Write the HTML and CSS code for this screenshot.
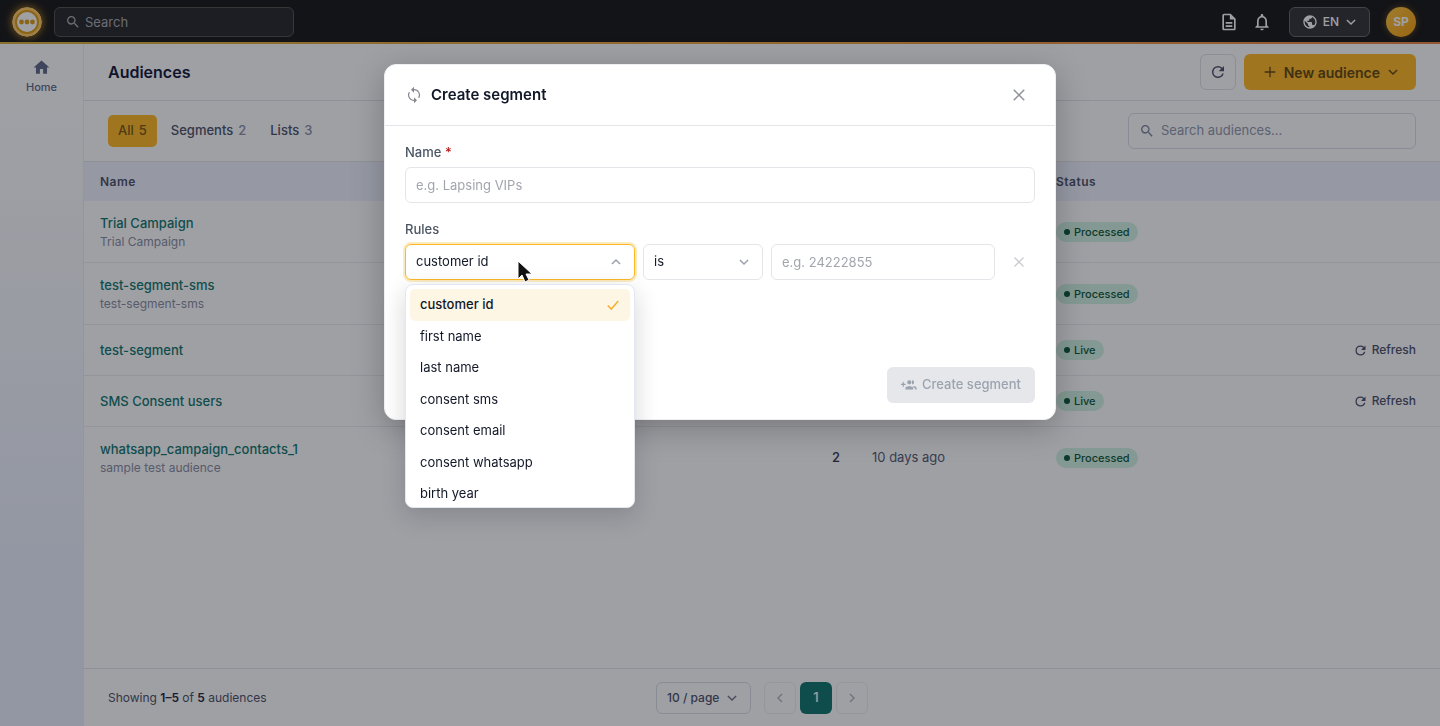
FILE: index.html
```html
<!DOCTYPE html>
<html lang="en">

<head>
    <meta charset="UTF-8">
    <meta name="viewport" content="width=device-width, initial-scale=1.0">
    <title>Audiences</title>
    <link rel="stylesheet" href="styles.css">
</head>

<body>
    <svg class="sprite" aria-hidden="true">
        <symbol id="search" viewBox="0 0 24 24">
            <path d="M15.5 14h-.79l-.28-.27A6.47 6.47 0 0 0 16 9.5 6.5 6.5 0 1 0 9.5 16c1.61 0 3.09-.59 4.23-1.57l.27.28v.79l5 4.99L20.49 19l-4.99-5zm-6 0C7.01 14 5 11.99 5 9.5S7.01 5 9.5 5 14 7.01 14 9.5 11.99 14 9.5 14z"/>
        </symbol>
        <symbol id="chevron" viewBox="0 0 24 24">
            <path d="M5 8.5l7 7 7-7" fill="none" stroke="currentColor" stroke-width="2.5"/>
        </symbol>
        <symbol id="close" viewBox="0 0 24 24">
            <path d="M3 3l18 18M21 3L3 21" fill="none" stroke="currentColor" stroke-width="2.5"/>
        </symbol>
        <symbol id="refresh" viewBox="0 0 24 24">
            <path d="M17.65 6.35A7.96 7.96 0 0 0 12 4a8 8 0 1 0 7.73 10h-2.08A6 6 0 1 1 12 6c1.66 0 3.14.69 4.22 1.78L13 11h7V4l-2.35 2.35z"/>
        </symbol>
    </svg>

    <header class="topbar">
        <a class="logo" href="#" aria-label="Dashboard">
            <svg viewBox="0 0 30 30">
                <circle cx="15" cy="15" r="15" fill="#ffc860"/>
                <circle cx="15" cy="15" r="11" fill="#fff" stroke="#dc9d15" stroke-width="2"/>
                <circle cx="9.5" cy="15" r="2.4" fill="#dc9d15"/>
                <circle cx="15" cy="15" r="2.4" fill="#dc9d15"/>
                <circle cx="20.5" cy="15" r="2.4" fill="#dc9d15"/>
            </svg>
        </a>
        <div class="top-search">
            <svg class="icon"><use href="#search"/></svg>
            <input type="search" placeholder="Search" aria-label="Search">
        </div>
        <div class="top-actions">
            <button class="icon-btn" aria-label="Documents">
                <svg viewBox="0 0 24 24"><path d="M8 16h8v2H8zm0-4h8v2H8zm6-10H6c-1.1 0-2 .9-2 2v16c0 1.1.89 2 1.99 2H18c1.1 0 2-.9 2-2V8l-6-6zm4 18H6V4h7v5h5v11z"/></svg>
            </button>
            <button class="icon-btn" aria-label="Notifications">
                <svg viewBox="0 0 24 24"><path d="M12 22c1.1 0 2-.9 2-2h-4c0 1.1.9 2 2 2zm6-6v-5c0-3.07-1.63-5.64-4.5-6.32V4c0-.83-.67-1.5-1.5-1.5s-1.5.67-1.5 1.5v.68C7.64 5.36 6 7.92 6 11v5l-2 2v1h16v-1l-2-2zm-2 1H8v-6c0-2.48 1.51-4.5 4-4.5s4 2.02 4 4.5v6z"/></svg>
            </button>
            <button class="lang">
                <svg class="icon" viewBox="0 0 24 24"><path d="M12 2C6.48 2 2 6.48 2 12s4.48 10 10 10 10-4.48 10-10S17.52 2 12 2zm-1 17.93c-3.95-.49-7-3.85-7-7.93 0-.62.08-1.21.21-1.79L9 15v1c0 1.1.9 2 2 2v1.93zm6.9-2.54c-.26-.81-1-1.39-1.9-1.39h-1v-3c0-.55-.45-1-1-1H8v-2h2c.55 0 1-.45 1-1V7h2c1.1 0 2-.9 2-2v-.41c2.93 1.19 5 4.06 5 7.41 0 2.08-.8 3.97-2.1 5.39z"/></svg>
                EN
                <svg class="caret"><use href="#chevron"/></svg>
            </button>
            <button class="avatar">SP</button>
        </div>
    </header>

    <div class="layout">
        <nav class="sidebar">
            <a href="#">
                <svg viewBox="0 0 24 24"><path d="M10 20v-6h4v6h5v-8h3L12 3 2 12h3v8z"/></svg>
                Home
            </a>
        </nav>

        <main>
            <div class="page-head">
                <h1>Audiences</h1>
                <button class="reload" aria-label="Reload"><svg><use href="#refresh"/></svg></button>
                <button class="new-btn">
                    <svg class="icon" viewBox="0 0 24 24"><path d="M20 13h-7v7h-2v-7H4v-2h7V4h2v7h7v2z"/></svg>
                    New audience
                    <svg class="caret"><use href="#chevron"/></svg>
                </button>
            </div>

            <div class="filters">
                <div class="tabs">
                    <button class="active">All <span>5</span></button>
                    <button>Segments <span>2</span></button>
                    <button>Lists <span>3</span></button>
                </div>
                <div class="table-search">
                    <svg class="icon"><use href="#search"/></svg>
                    <input type="search" placeholder="Search audiences..." aria-label="Search audiences">
                </div>
            </div>

            <table>
                <colgroup>
                    <col>
                    <col class="col-count">
                    <col class="col-date">
                    <col class="col-status">
                    <col class="col-action">
                </colgroup>
                <thead>
                    <tr>
                        <th>Name</th>
                        <th></th>
                        <th></th>
                        <th>Status</th>
                        <th></th>
                    </tr>
                </thead>
                <tbody>
                    <tr>
                        <td><a href="#">Trial Campaign</a><small>Trial Campaign</small></td>
                        <td></td>
                        <td></td>
                        <td><span class="badge">Processed</span></td>
                        <td></td>
                    </tr>
                    <tr>
                        <td><a href="#">test-segment-sms</a><small>test-segment-sms</small></td>
                        <td></td>
                        <td></td>
                        <td><span class="badge">Processed</span></td>
                        <td></td>
                    </tr>
                    <tr>
                        <td><a href="#">test-segment</a></td>
                        <td></td>
                        <td></td>
                        <td><span class="badge">Live</span></td>
                        <td><button class="row-btn"><svg><use href="#refresh"/></svg>Refresh</button></td>
                    </tr>
                    <tr>
                        <td><a href="#">SMS Consent users</a></td>
                        <td></td>
                        <td></td>
                        <td><span class="badge">Live</span></td>
                        <td><button class="row-btn"><svg><use href="#refresh"/></svg>Refresh</button></td>
                    </tr>
                    <tr>
                        <td><a href="#">whatsapp_campaign_contacts_1</a><small>sample test audience</small></td>
                        <td class="count">2</td>
                        <td class="date">10 days ago</td>
                        <td><span class="badge">Processed</span></td>
                        <td></td>
                    </tr>
                </tbody>
            </table>

            <footer class="pagination">
                <p>Showing <b>1–5</b> of <b>5</b> audiences</p>
                <div class="pager">
                    <div class="select page-size">
                        <select aria-label="Rows per page">
                            <option>10 / page</option>
                        </select>
                        <svg class="caret"><use href="#chevron"/></svg>
                    </div>
                    <button class="prev" disabled aria-label="Previous page"><svg><use href="#chevron"/></svg></button>
                    <button class="current">1</button>
                    <button class="next" disabled aria-label="Next page"><svg><use href="#chevron"/></svg></button>
                </div>
            </footer>
        </main>
    </div>

    <div class="overlay">
        <form class="modal" role="dialog" aria-labelledby="modalTitle">
            <div class="modal-head">
                <svg class="sync" viewBox="0 0 24 24"><path d="M12 4V1L8 5l4 4V5.500a6.500 6.500 0 0 1 5.600 9.800l1.100 1.100A8 8 0 0 0 12 4zM12 18.500a6.500 6.500 0 0 1-5.600-9.800L5.300 7.600A8 8 0 0 0 12 20v3l4-4-4-4v3.500z"/></svg>
                <h2 id="modalTitle">Create segment</h2>
                <button type="button" class="close-btn" aria-label="Close"><svg><use href="#close"/></svg></button>
            </div>
            <div class="modal-body">
                <div class="field">
                    <label for="segmentName">Name <span class="required">*</span></label>
                    <input id="segmentName" type="text" placeholder="e.g. Lapsing VIPs">
                </div>
                <div class="field rules">
                    <label for="ruleField">Rules</label>
                    <div class="rule">
                        <div class="select open">
                            <select id="ruleField">
                                <option>customer id</option>
                            </select>
                            <svg class="caret"><use href="#chevron"/></svg>
                            <ul class="menu" role="listbox">
                                <li role="option" aria-selected="true">customer id
                                    <svg viewBox="0 0 24 24"><path d="M3 13l6 6L21 5" fill="none" stroke="currentColor" stroke-width="2.500"/></svg>
                                </li>
                                <li role="option">first name</li>
                                <li role="option">last name</li>
                                <li role="option">consent sms</li>
                                <li role="option">consent email</li>
                                <li role="option">consent whatsapp</li>
                                <li role="option">birth year</li>
                            </ul>
                            <svg class="cursor" viewBox="0 0 16 24"><path d="M1 1v18l4-4 3 7 4-2-3-6h6z" fill="#111" stroke="#fff" stroke-width="1"/></svg>
                        </div>
                        <div class="select">
                            <select aria-label="Operator">
                                <option>is</option>
                            </select>
                            <svg class="caret"><use href="#chevron"/></svg>
                        </div>
                        <input type="text" placeholder="e.g. 24222855" aria-label="Value">
                        <button type="button" class="remove-btn" disabled aria-label="Remove rule"><svg><use href="#close"/></svg></button>
                    </div>
                </div>
            </div>
            <div class="modal-foot">
                <button class="submit" disabled>
                    <svg viewBox="0 0 24 24" fill="none" stroke="currentColor" stroke-width="1.800">
                        <path d="M0 11h7M3.500 7.500v7"/>
                        <circle cx="12.500" cy="8" r="2.300"/>
                        <path d="M16.500 5.700a2.300 2.300 0 1 1 0 4.600"/>
                        <path d="M7.500 18v-1c0-3 10-3 10 0v1zM18.500 14.500c2.500.2 4 1.200 4 2.500v1.800"/>
                    </svg>
                    Create segment
                </button>
            </div>
        </form>
    </div>
</body>

</html>
```
FILE: styles.css
```css
* {
    box-sizing: border-box;
}

body {
    margin: 0;
    min-height: 100vh;
    display: flex;
    flex-direction: column;
    font-family: Inter, "Liberation Sans", sans-serif;
    font-size: 13px;
    line-height: 1.5;
    color: #111827;
    background: #fff;
}

button,
input,
select {
    font: inherit;
    color: inherit;
}

button {
    padding: 0;
    border: 0;
    background: none;
    display: flex;
    align-items: center;
    justify-content: center;
}

input {
    min-width: 0;
}

a {
    text-decoration: none;
}

h1,
h2,
p,
ul {
    margin: 0;
    padding: 0;
}

svg {
    display: block;
    flex: none;
    fill: currentColor;
}

.sprite {
    display: none;
}

.icon {
    width: 16px;
    height: 16px;
}

.caret {
    width: 14px;
    height: 14px;
}

/* Top bar */
.topbar {
    height: 44px;
    display: flex;
    align-items: center;
    gap: 12px;
    padding: 2px 24px 0 12px;
    background: #171615;
    border-bottom: 2px solid;
    border-image: linear-gradient(90deg, #d9b03a, #f0a63c, #ec8545) 1;
}

.logo svg {
    width: 30px;
    height: 30px;
    border-radius: 50%;
    box-shadow: 0 0 8px #c28a20;
}

.top-search {
    width: 240px;
    height: 30px;
    display: flex;
    align-items: center;
    gap: 4px;
    padding: 0 10px;
    border: 1px solid #54504a;
    border-radius: 6px;
    background: #27272a;
    color: #a9aab0;
}

.top-search input,
.table-search input {
    flex: 1;
    padding: 0;
    border: 0;
    outline: 0;
    background: none;
}

.top-search input {
    height: 24px;
}

.top-search input::placeholder {
    color: #a9aab0;
}

.top-actions {
    margin-left: auto;
    display: flex;
    align-items: center;
    gap: 13px;
    color: #fff;
}

.icon-btn svg {
    width: 20px;
    height: 20px;
}

.lang {
    height: 30px;
    gap: 5px;
    margin: 0 3px 0 4px;
    padding: 0 11px 0 12px;
    border: 1px solid #66666c;
    border-radius: 6px;
    background: #323236;
    font-size: 12px;
    font-weight: 500;
}

.avatar {
    width: 30px;
    height: 30px;
    border-radius: 50%;
    background: linear-gradient(135deg, #ffc53d, #f59e0b);
    box-shadow: 0 0 6px #6b4d1c;
    font-size: 12px;
    font-weight: 700;
}

/* Layout */
.layout {
    flex: 1;
    display: flex;
}

.sidebar {
    width: 84px;
    padding-top: 14px;
    border-right: 1px solid #eeeef3;
    background: linear-gradient(#fff 10%, #eaf0fd 80%);
}

.sidebar a {
    display: flex;
    flex-direction: column;
    align-items: center;
    gap: 2px;
    font-size: 11px;
    font-weight: 500;
    color: #5f6889;
}

.sidebar svg {
    width: 19px;
    height: 19px;
}

main {
    flex: 1;
    min-width: 0;
    display: flex;
    flex-direction: column;
}

.page-head,
.filters {
    display: flex;
    align-items: center;
    padding: 0 24px;
    border-bottom: 1px solid #e4e5ea;
}

.page-head {
    height: 57px;
    gap: 8px;
}

h1 {
    margin-right: auto;
    font-size: 16px;
    line-height: 24px;
    font-weight: 600;
    color: #10163a;
}

.reload {
    width: 36px;
    height: 36px;
    border: 1px solid #e0e1e8;
    border-radius: 6px;
    color: #4b5068;
}

.reload svg {
    width: 18px;
    height: 18px;
}

.new-btn {
    height: 36px;
    gap: 6px;
    padding: 0 16px 0 18px;
    border-radius: 6px;
    background: #ffb722;
    color: #62470f;
    font-size: 14px;
    font-weight: 600;
}

.filters {
    height: 61px;
    justify-content: space-between;
}

.tabs {
    display: flex;
    gap: 4px;
}

.tabs button {
    height: 32px;
    gap: 5px;
    padding: 0 10px;
    border-radius: 5px;
    font-weight: 500;
    color: #4b5068;
}

.tabs span {
    color: #8a8fa6;
}

.tabs .active,
.tabs .active span {
    background: #ffb722;
    color: #7a5810;
}

.table-search {
    width: 288px;
    height: 36px;
    display: flex;
    align-items: center;
    gap: 6px;
    padding: 0 10px;
    border: 1px solid #dcdee6;
    border-radius: 6px;
    color: #7c8399;
}

.table-search input::placeholder {
    color: #9097ac;
}

/* Table */
table {
    width: 100%;
    table-layout: fixed;
    border-collapse: collapse;
}

.col-count {
    width: 140px;
}

.col-date {
    width: 184px;
}

.col-status {
    width: 200px;
}

.col-action {
    width: 200px;
}

th {
    height: 39px;
    padding: 0 16px;
    background: #f0f4ff;
    text-align: left;
    font-size: 12px;
    font-weight: 600;
    letter-spacing: 0.04em;
    color: #4b5068;
}

td {
    height: 51px;
    padding: 12px 16px;
    border-bottom: 1px solid #ededf1;
}

tbody tr:last-child td {
    border-bottom: 0;
}

td:last-child {
    padding-right: 24px;
}

td a {
    display: block;
    line-height: 20px;
    font-weight: 500;
    color: #0f766e;
}

td small {
    display: block;
    font-size: 12px;
    line-height: 17px;
    color: #898ca2;
}

.count {
    text-align: right;
    font-weight: 500;
    color: #30344f;
}

.date {
    color: #565b74;
}

.badge {
    display: flex;
    align-items: center;
    gap: 4px;
    width: fit-content;
    padding: 2px 8px;
    border-radius: 10px;
    background: #d2f4e3;
    font-size: 11px;
    line-height: 16px;
    font-weight: 500;
    color: #0c5736;
}

.badge::before {
    content: "";
    width: 6px;
    height: 6px;
    border-radius: 50%;
    background: currentColor;
}

.row-btn {
    margin-left: auto;
    gap: 4px;
    font-size: 12px;
    font-weight: 500;
    color: #4b5068;
}

.row-btn svg {
    width: 15px;
    height: 15px;
}

/* Pagination */
.pagination {
    height: 58px;
    margin-top: auto;
    display: grid;
    grid-template-columns: 1fr auto 1fr;
    align-items: center;
    padding: 0 24px;
    border-top: 1px solid #e4e5ea;
    font-size: 12px;
    color: #4b5068;
}

.pagination b {
    font-weight: 600;
    color: #22263f;
}

.pager {
    display: flex;
    gap: 4px;
}

.pager button {
    width: 32px;
    height: 32px;
    border: 1px solid #eeeef2;
    border-radius: 6px;
    font-size: 13px;
    font-weight: 500;
}

.pager button svg {
    width: 14px;
    height: 14px;
    color: #b4b7c4;
}

.pager .current {
    border: 0;
    background: #0f766e;
    color: #fff;
}

.prev svg {
    transform: rotate(90deg);
}

.next svg {
    transform: rotate(-90deg);
}

/* Selects */
.select {
    position: relative;
}

.select select {
    width: 100%;
    height: 36px;
    padding: 0 10px;
    appearance: none;
    border: 1px solid #e3e5e8;
    border-radius: 6px;
    outline: 0;
    background: none;
}

.select .caret {
    position: absolute;
    top: 11px;
    right: 12px;
    color: #9ca0a8;
    pointer-events: none;
}

.page-size {
    width: 95px;
    margin-right: 9px;
}

.page-size select {
    height: 32px;
    border-color: #dcdee6;
    font-weight: 500;
}

.page-size .caret {
    top: 9px;
    color: #70758b;
}

/* Modal */
.overlay {
    position: fixed;
    inset: 0;
    display: flex;
    align-items: flex-start;
    justify-content: center;
    padding-top: 64px;
    background: rgba(15, 17, 28, 0.4);
}

.modal {
    width: 672px;
    max-width: 100%;
    border: 1px solid #eeeff2;
    border-radius: 12px;
    background: #fff;
    box-shadow: 0 8px 32px rgba(0, 0, 0, 0.25);
}

.modal-head {
    height: 61px;
    display: flex;
    align-items: center;
    gap: 8px;
    padding: 0 20px;
    border-bottom: 1px solid #e3e5e8;
}

.sync {
    width: 18px;
    height: 18px;
    color: #84878e;
}

h2 {
    margin-right: auto;
    font-size: 15px;
    line-height: 24px;
    font-weight: 600;
}

.close-btn,
.remove-btn {
    width: 32px;
    height: 36px;
    color: #8e9197;
}

.close-btn svg {
    width: 14px;
    height: 14px;
}

.remove-btn svg {
    width: 12px;
    height: 12px;
    color: #c9cbcf;
}

.modal-body {
    padding: 16px 20px;
}

.field {
    display: flex;
    flex-direction: column;
    gap: 5px;
}

.field label {
    line-height: 20px;
    font-weight: 500;
    color: #4b5563;
}

.required {
    color: #b91c1c;
}

.field input {
    height: 36px;
    padding: 0 10px;
    border: 1px solid #e3e5e8;
    border-radius: 6px;
    outline: 0;
}

.field input::placeholder {
    color: #a2a5ad;
}

.rules {
    min-height: 116px;
    margin-top: 16px;
}

.rule {
    display: grid;
    grid-template-columns: 230px 120px 1fr 32px;
    gap: 8px;
}

.open select {
    border-color: #fbb724;
    box-shadow: 0 0 0 2px #fdebc0;
}

.open .caret {
    transform: rotate(180deg);
}

.menu {
    position: absolute;
    top: 40px;
    left: 0;
    right: 0;
    max-height: 224px;
    overflow: hidden;
    padding: 4px;
    border: 1px solid #e3e7f0;
    border-radius: 8px;
    background: #fff;
    box-shadow: 0 8px 24px rgba(20, 24, 40, 0.18);
    list-style: none;
}

.menu li {
    display: flex;
    align-items: center;
    justify-content: space-between;
    padding: 6px 10px;
    border-radius: 5px;
}

.menu li[aria-selected="true"] {
    background: #fef6e4;
    font-weight: 500;
}

.menu svg {
    width: 14px;
    height: 14px;
    color: #f5b02e;
}

.cursor {
    position: absolute;
    top: 16px;
    left: 112px;
    width: 16px;
    height: 24px;
}

.modal-foot {
    display: flex;
    justify-content: flex-end;
    padding: 16px 20px;
}

.submit {
    height: 36px;
    gap: 5px;
    padding: 0 14px;
    border-radius: 6px;
    background: #e5e7eb;
    font-weight: 500;
    color: #9ca3af;
}

.submit svg {
    width: 16px;
    height: 16px;
}
```
